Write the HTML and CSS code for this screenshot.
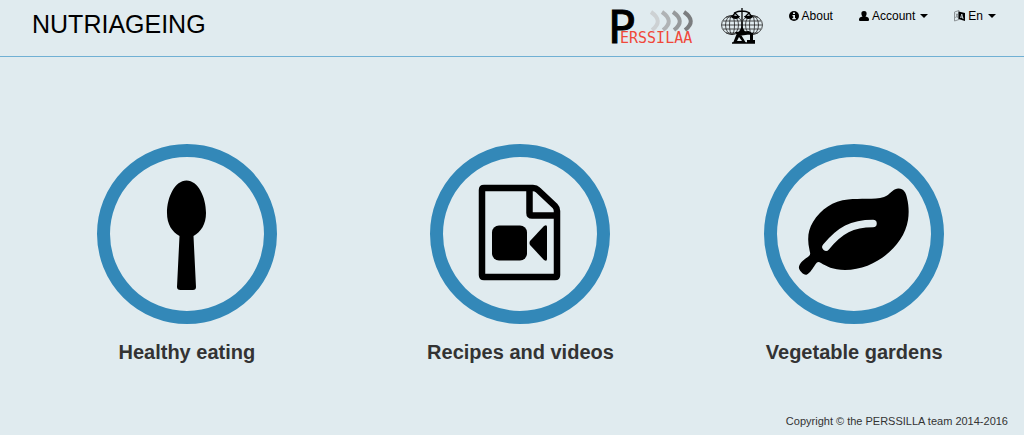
FILE: index.html
```html
<!doctype html>
<html lang="en">

<head>
  <meta charset="utf-8">
  <meta name="viewport" content="width=device-width, initial-scale=1">
  <title>NUTRIAGEING</title>
  <link rel="stylesheet" href="styles.css">
</head>

<body>
  <header class="header">
    <h1 class="brand">NUTRIAGEING</h1>

    <svg class="logo" width="88" height="40" viewBox="-4 0 88 40" role="img" aria-label="Perssilaa">
      <g fill="none" stroke-width="4">
        <path d="M40 4Q53 13 41 22" stroke="#cdd1d3" />
        <path d="M51 4Q64 13 52 22" stroke="#b0b3b5" />
        <path d="M62 4Q75 13 63 22" stroke="#96999b" />
        <path d="M73 4Q86 13 74 22" stroke="#7b7d7f" />
      </g>
      <text class="logo-p" x="-3" y="35">P</text>
      <text class="logo-name" x="9" y="35">ERSSILAA</text>
    </svg>

    <svg class="logo" width="42" height="40" viewBox="0 0 42 40" aria-hidden="true">
      <g fill="none" stroke="#222" stroke-width="0.8">
        <ellipse cx="11" cy="17" rx="10.5" ry="9.5" />
        <ellipse cx="11" cy="17" rx="6.5" ry="9.5" />
        <ellipse cx="11" cy="17" rx="2.5" ry="9.5" />
        <path d="M1 17h20M2 13h18M2 21h18M5 25h12M5 9h12" />
        <ellipse cx="31" cy="17" rx="10.5" ry="9.5" />
        <ellipse cx="31" cy="17" rx="6.5" ry="9.5" />
        <ellipse cx="31" cy="17" rx="2.5" ry="9.5" />
        <path d="M21 17h20M22 13h18M22 21h18M25 25h12M25 9h12" />
      </g>
      <!-- scales -->
      <path d="M21 0v22M13 5q8-4 16 0M14 5l-3 4M14 5l4 4M28 5l-4 4M28 5l3 4" fill="none" stroke="#000" stroke-width="1.3" />
      <path d="M10 8h9q-1 3-4.500 3T10 8zM23 8h9q-1 3-4.500 3T23 8z" />
      <path d="M18 24l3-6 3 6z" />
      <!-- microscope and base -->
      <path d="M14 24l14-1 4 3-15 2zM12 35l4-10h3l6 10zM29 25h3v8h-3zM26 32h8v3h-8z" />
      <path d="M11 35h23" stroke="#000" stroke-width="1.500" />
      <path d="M16 33l2-4 3 4z" fill="#e0ebef" />
    </svg>

    <nav class="nav">
      <a class="nav-item" href="#about">
        <svg width="10" height="10" viewBox="0 0 10 10" aria-hidden="true">
          <circle cx="5" cy="5" r="5" />
          <path d="M4 1.500h2v1.500h-2zM3.500 4h2.500v3h.8v1.200h-3.500v-1.200h.9v-1.800h-.7z" fill="#e0ebef" />
        </svg>
        About
      </a>
      <button class="nav-item" type="button" aria-haspopup="true">
        <svg width="10" height="10" viewBox="0 0 10 10" aria-hidden="true">
          <path d="M5 0C7 0 7.800 1.200 7.600 3C7.500 4.200 7 5 6.500 5.500Q10 6 10 8.500V9Q10 10 9 10H1Q0 10 0 9V8.500Q0 6 3.500 5.500C3 5 2.500 4.200 2.400 3C2.200 1.200 3 0 5 0z" />
        </svg>
        Account
        <span class="caret"></span>
      </button>
      <button class="nav-item" type="button" aria-haspopup="true">
        <svg width="11" height="12" viewBox="0 0 11 12" aria-hidden="true">
          <path d="M.5 2l4.500-1.500v9L.5 11zM2 3.500l2 4.500M4 3.500L1.500 8" fill="none" stroke="#8d9396" />
          <path d="M4.500 1.500L11 3v8l-6.500-2z" />
          <path d="M6.500 8l1.300-4 1.300 5M7 7l2 .4" fill="none" stroke="#e0ebef" stroke-width="0.8" />
        </svg>
        En
        <span class="caret"></span>
      </button>
    </nav>
  </header>

  <main class="sections">
    <a class="section" href="#eating">
      <span class="circle">
        <svg viewBox="13 13 154 154" aria-hidden="true">
          <path d="M89.500 36.500C101 36.500 109 53 109 69C109 80 104 88 96.500 92L99 143Q99 146 96 146H83.500Q80 146 80 143L82.500 92C75 88 70 80 70 69C70 53 78 36.500 89.500 36.500z" />
        </svg>
      </span>
      Healthy eating
    </a>

    <a class="section" href="#recipes">
      <span class="circle">
        <svg viewBox="13 13 154 154" aria-hidden="true">
          <path d="M54 44H103Q106 44 108 46L125 62Q127 64 127 67V131Q127 133 125 133H54Q52 133 52 131V46Q52 44 54 44zM99.500 44V69Q99.500 71.500 102 71.500H127M106 44V47" fill="none" stroke="#000" stroke-width="6.500" />
          <rect x="62" y="81.500" width="35" height="35" rx="7" />
          <path d="M100 97L114 82Q117 80 117 83V115Q117 118 114 116L100 101Q99 99 100 97z" />
        </svg>
      </span>
      Recipes and videos
    </a>

    <a class="section" href="#gardens">
      <span class="circle">
        <svg viewBox="13 13 154 154" aria-hidden="true">
          <path d="M134 44.500C139 44 142 48 143 54C145 62 145 70 144 76C140 102 111 126 81 126C69 126 62 122 57 119C54 117 53 118 51 121C49 124 46 129 43 130.500C40 132 34 126 35 122.500C36 118 41 115 45 112C47 110 46 109 45.500 106C43 95 44 86 49 78C57 65 69 57 84 55.500C96 54 110 56 120 53C126 51 128 45 134 44.500z" />
          <path d="M62 103C76 86 88 79.500 109 79.500" fill="none" stroke="#e0ebef" stroke-width="7.500" stroke-linecap="round" />
        </svg>
      </span>
      Vegetable gardens
    </a>
  </main>

  <footer class="footer">Copyright © the PERSSILLA team 2014-2016</footer>
</body>

</html>
```
FILE: styles.css
```css
* {
  box-sizing: border-box;
}

body {
  margin: 0;
  min-height: 100vh;
  display: flex;
  flex-direction: column;
  background-color: #e0ebef;
  color: #333;
  font-family: "Liberation Sans", Arial, sans-serif;
}

.header {
  display: flex;
  align-items: flex-start;
  gap: 26px;
  padding: 8px 28px 8px 32px;
  border-bottom: 1px solid #70b0d4;
}

.brand {
  margin: 0 auto 0 0;
  color: #000;
  font-size: 25px;
  font-weight: normal;
  line-height: 32px;
}

.logo {
  flex: none;
  overflow: visible;
}

.logo-p {
  font: 45px "DejaVu Sans", sans-serif;
  stroke: #000;
}

.logo-name {
  font: 15px "DejaVu Sans Mono", monospace;
  fill: #f0483a;
}

.nav {
  display: flex;
  gap: 26px;
}

.nav-item {
  display: flex;
  align-items: center;
  gap: 3px;
  padding: 0;
  border: 0;
  background: none;
  color: #000;
  font-family: inherit;
  font-size: 12px;
  line-height: 16px;
  text-decoration: none;
  cursor: pointer;
}

.caret {
  margin-left: 2px;
  border-top: 4px solid #000;
  border-left: 4px solid transparent;
  border-right: 4px solid transparent;
}

.sections {
  display: grid;
  grid-template-columns: repeat(3, 1fr);
  padding: 87px 3px 32px 20px;
}

.section {
  display: flex;
  flex-direction: column;
  align-items: center;
  gap: 16px;
  color: #333;
  font-size: 20px;
  font-weight: bold;
  line-height: 24px;
  text-decoration: none;
}

.circle {
  width: 180px;
  height: 180px;
  border: 13px solid #3388b8;
  border-radius: 50%;
}

.circle svg {
  display: block;
  width: 100%;
}

.footer {
  margin-top: auto;
  padding: 0 16px 6px;
  font-size: 11px;
  line-height: 16px;
  text-align: right;
}
```
